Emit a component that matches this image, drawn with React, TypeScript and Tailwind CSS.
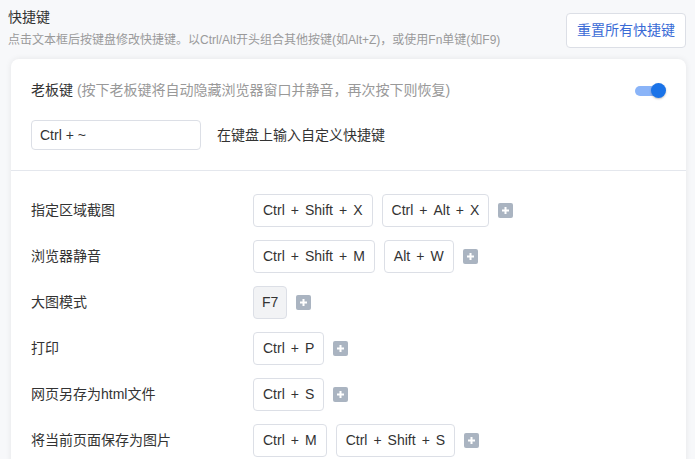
import React from "react";

type Shortcut = { label: string; keys: string[][]; gray?: boolean };

const shortcuts: Shortcut[] = [
  { label: "指定区域截图", keys: [["Ctrl", "Shift", "X"], ["Ctrl", "Alt", "X"]] },
  { label: "浏览器静音", keys: [["Ctrl", "Shift", "M"], ["Alt", "W"]] },
  { label: "大图模式", keys: [["F7"]], gray: true },
  { label: "打印", keys: [["Ctrl", "P"]] },
  { label: "网页另存为html文件", keys: [["Ctrl", "S"]] },
  { label: "将当前页面保存为图片", keys: [["Ctrl", "M"], ["Ctrl", "Shift", "S"]] },
];

function KeyBox({ parts, gray }: { parts: string[]; gray?: boolean }) {
  return (
    <div
      className={`flex h-[33px] items-center rounded-[4px] border border-[#dcdfe6] text-[14px] text-[#333] ${
        gray ? "bg-[#f2f3f5] px-[8px]" : "bg-white px-[9px]"
      }`}
    >
      {parts.map((p, i) => (
        <React.Fragment key={i}>
          {i > 0 && <span className="mx-[6px]">+</span>}
          <span>{p}</span>
        </React.Fragment>
      ))}
    </div>
  );
}

function PlusButton() {
  return (
    <div className="flex h-[15px] w-[15px] items-center justify-center rounded-[2px] bg-[#aab4c1]">
      <svg width="9" height="9" viewBox="0 0 9 9">
        <path d="M4.5 1v7M1 4.5h7" stroke="white" strokeWidth="2" />
      </svg>
    </div>
  );
}

export default function App() {
  return (
    <main
      className="min-h-screen bg-[#f7f8fa] text-[#333]"
      style={{ fontFamily: '"Liberation Sans", "Noto Sans CJK SC", sans-serif' }}
    >
      <header className="flex items-start justify-between pl-[8px] pr-[9px] pt-[7px]">
        <div>
          <h1 className="text-[14px] leading-[20px] text-[#333]">快捷键</h1>
          <p className="mt-[4px] text-[12px] leading-[18px] text-[#9a9a9a]">
            点击文本框后按键盘修改快捷键。以Ctrl/Alt开头组合其他按键(如Alt+Z)，或使用Fn单键(如F9)
          </p>
        </div>
        <button className="mt-[6px] h-[35px] w-[120px] rounded-[4px] border border-[#dcdfe6] bg-white text-[14px] text-[#3a6bd6]">
          重置所有快捷键
        </button>
      </header>

      <section className="mt-[10px] ml-[11px] mr-[9px] rounded-[8px] bg-white shadow-[0_0_6px_rgba(0,0,0,0.08)]">
        <div className="px-[20px] pt-[20px] pb-[20px]">
          <div className="flex items-center justify-between">
            <p className="text-[14px] leading-[22px]">
              老板键
              <span className="text-[#999]"> (按下老板键将自动隐藏浏览器窗口并静音，再次按下则恢复)</span>
            </p>
            <div className="relative h-[15px] w-[31px]">
              <div className="absolute left-0 top-[3px] h-[10px] w-[26px] rounded-full bg-[#8ab4f8]" />
              <div className="absolute right-0 top-0 h-[15px] w-[15px] rounded-full bg-[#1a73e8] shadow-[0_1px_2px_rgba(0,0,0,0.25)]" />
            </div>
          </div>
          <div className="mt-[19px] flex items-center gap-[16px]">
            <div className="flex h-[30px] w-[170px] items-center rounded-[4px] border border-[#dcdfe6] px-[8px] text-[14px]">
              Ctrl + ~
            </div>
            <span className="text-[14px]">在键盘上输入自定义快捷键</span>
          </div>
        </div>
        <div className="border-t border-[#e4e7ed]" />
        <div className="flex flex-col gap-[13px] px-[20px] pt-[23px] pb-[20px]">
          {shortcuts.map((s) => (
            <div key={s.label} className="flex items-center">
              <span className="w-[222px] text-[14px]">{s.label}</span>
              <div className="flex items-center gap-[9px]">
                {s.keys.map((k, i) => (
                  <KeyBox key={i} parts={k} gray={s.gray} />
                ))}
                <PlusButton />
              </div>
            </div>
          ))}
        </div>
      </section>
    </main>
  );
}
